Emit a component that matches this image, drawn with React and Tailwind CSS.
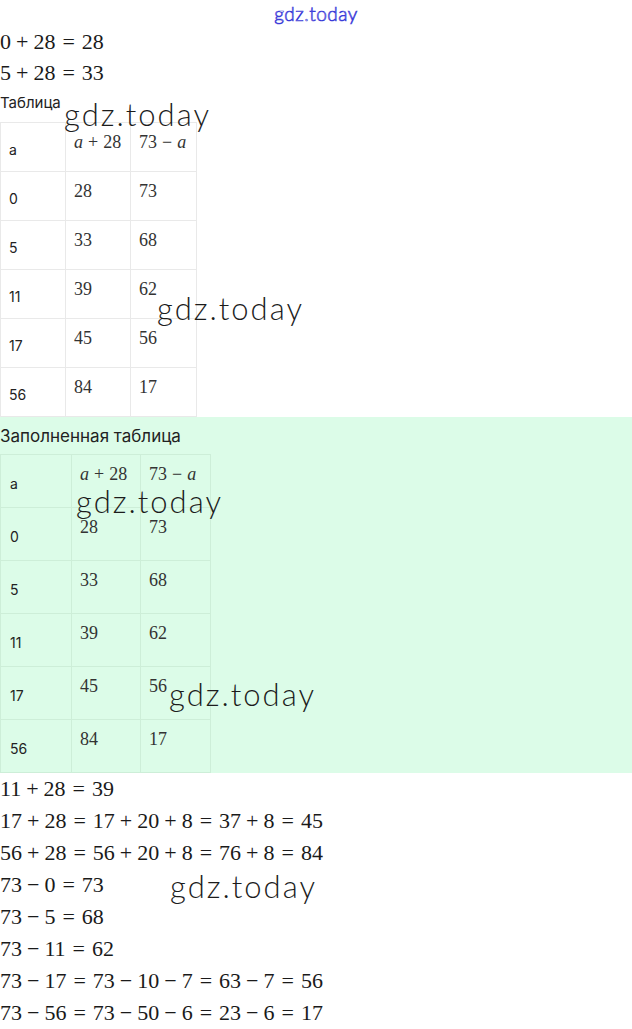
import React from "react";

const sans = "[font-family:Inter,Roboto,sans-serif]";
const serif = "[font-family:'Liberation_Serif','Times_New_Roman',serif]";
const mark = "[font-family:'Lato_Light',Lato,sans-serif] font-light";

function Eq({ expr, op = "mx-[5px]", eq = "mx-[7px]" }) {
  return expr.split(" ").map((t, i) => {
    if (t === "+") return <span key={i} className={op}>+</span>;
    if (t === "-") return <span key={i} className={op}>−</span>;
    if (t === "=") return <span key={i} className={eq}>=</span>;
    if (/^[a-z]$/.test(t)) return <span key={i} className="italic">{t}</span>;
    return <span key={i}>{t}</span>;
  });
}

const rows = [
  ["0", "28", "73"],
  ["5", "33", "68"],
  ["11", "39", "62"],
  ["17", "45", "56"],
  ["56", "84", "17"],
];

function Table({ w, h, line, padA }) {
  const all = [["a", "a + 28", "73 - a"], ...rows];
  return (
    <table className="border-collapse">
      <tbody>
        {all.map((r, i) => (
          <tr key={i}>
            <td className={`${w[0]} ${h} ${line} ${padA} border align-middle text-[14px] text-[#222] ${sans}`}>
              {r[0]}
            </td>
            {[r[1], r[2]].map((c, j) => (
              <td
                key={j}
                className={`${w[j + 1]} ${h} ${line} border align-top pl-[8px] pt-[8px] text-[18px] leading-[22px] text-[#333] ${serif}`}
              >
                <Eq expr={c} op="mx-[5px]" />
              </td>
            ))}
          </tr>
        ))}
      </tbody>
    </table>
  );
}

function Mark({ className }) {
  return (
    <div className={`absolute text-[31px] leading-none tracking-[2px] text-[#1c1c1c] ${mark} ${className}`}>
      gdz.today
    </div>
  );
}

export default function App() {
  const top = ["0 + 28 = 28", "5 + 28 = 33"];
  const bottom = [
    "11 + 28 = 39",
    "17 + 28 = 17 + 20 + 8 = 37 + 8 = 45",
    "56 + 28 = 56 + 20 + 8 = 76 + 8 = 84",
    "73 - 0 = 73",
    "73 - 5 = 68",
    "73 - 11 = 62",
    "73 - 17 = 73 - 10 - 7 = 63 - 7 = 56",
    "73 - 56 = 73 - 50 - 6 = 23 - 6 = 17",
  ];

  return (
    <div className="relative w-[632px] min-h-[1029px] bg-white overflow-hidden">
      <div className="h-[26px] flex justify-center items-center">
        <span className={`text-[19px] leading-none tracking-[0.5px] text-transparent [-webkit-text-stroke:0.7px_#3a3ad8] ${mark}`}>
          gdz.today
        </span>
      </div>

      <div className={`text-[22px] leading-[31px] text-[#1a1a1a] ${serif}`}>
        {top.map((e) => (
          <div key={e}>
            <Eq expr={e} />
          </div>
        ))}
      </div>

      <div className={`h-[34px] pt-[6px] text-[15px] leading-[18px] text-[#222] ${sans}`}>Таблица</div>

      <Table
        w={["w-[65px]", "w-[65px]", "w-[66px]"]}
        h="h-[49px]"
        line="border-[#e9e9e9]"
        padA="pl-[8px] pt-[4px]"
      />

      <div className="bg-[#dcfce8]">
        <div className={`pt-[8px] pb-[7px] text-[17px] leading-[22px] text-[#222] ${sans}`}>
          Заполненная таблица
        </div>
        <Table
          w={["w-[71px]", "w-[69px]", "w-[70px]"]}
          h="h-[53px]"
          line="border-[#cdeed8]"
          padA="pl-[9px] pt-[4px]"
        />
      </div>

      <div className={`text-[22px] leading-[32px] text-[#1a1a1a] ${serif}`}>
        {bottom.map((e) => (
          <div key={e}>
            <Eq expr={e} />
          </div>
        ))}
      </div>

      <Mark className="left-[64px] top-[99px]" />
      <Mark className="left-[157px] top-[293px]" />
      <Mark className="left-[76px] top-[486px]" />
      <Mark className="left-[169px] top-[679px]" />
      <Mark className="left-[170px] top-[871px]" />
    </div>
  );
}
